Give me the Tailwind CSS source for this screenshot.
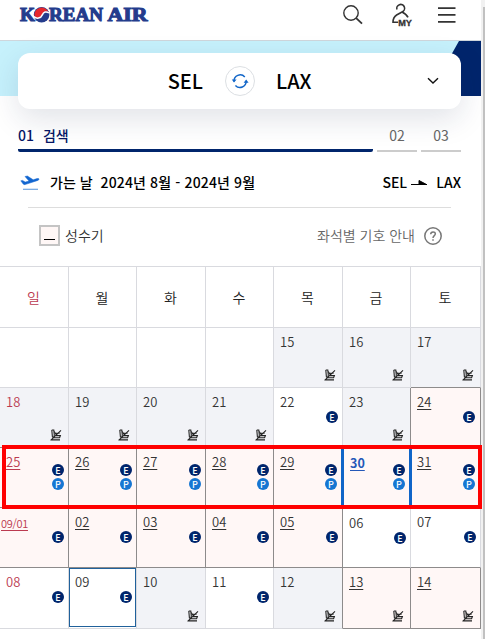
<!DOCTYPE html>
<html lang="ko">

<head>
    <meta charset="UTF-8">
    <meta name="viewport" content="width=device-width, initial-scale=1.0">
    <script src="https://cdn.jsdelivr.net/npm/@tailwindcss/browser@4"></script>
    <title>Korean Air</title>
</head>

<body class="relative h-[639px] w-[485px] overflow-hidden bg-white font-['Noto_Sans_CJK_KR',sans-serif] text-black">
    <svg class="hidden">
        <symbol id="seat" viewBox="0 0 12 12">
            <g fill="none" stroke="#222" stroke-width="1.1">
                <path d="M1.8 1 H3.8 L4.3 6 L3.8 8.8 H9.6 L10.4 6.6 H6 M1.8 1 L2.4 8 L4 8.8" />
                <path d="M4.2 2.5 L6.4 6 M4.5 4.3 L9.6 4.2 M1.5 10.9 H10 M11 1.4 L.6 11.4" />
            </g>
        </symbol>
    </svg>

    <header class="flex h-[41px] items-start justify-between border-b border-[#cfd6dc] pl-[19px] pr-[29px]">
        <svg class="mt-[5px]" width="132" height="20" viewBox="0 0 132 20">
            <g fill="#243c8c" stroke="#243c8c" stroke-width="1.1" font-family="Liberation Serif, serif" font-weight="700" font-size="19.5">
                <text x="1" y="16.4" textLength="15" lengthAdjust="spacingAndGlyphs">K</text>
                <text x="30" y="16.4" textLength="54" lengthAdjust="spacingAndGlyphs">REAN</text>
                <text x="88.5" y="16.4" textLength="40" lengthAdjust="spacingAndGlyphs">AIR</text>
            </g>
            <circle cx="22.6" cy="9.8" r="7.8" fill="#243c8c" />
            <path d="M15.6 11.6 A7.3 7.3 0 0 1 29.4 7 C26.5 5.2 24 7.4 22.9 10 C21.4 13.4 17.6 13.6 15.6 11.6Z" fill="#e5282d" />
            <path d="M14.8 11.6 C17.5 14 21.7 13.8 23.3 9.9 C24.6 6.8 27.2 6 30 8" fill="none" stroke="#fff" stroke-width="1.5" />
        </svg>
        <div class="flex items-start">
            <svg class="mt-[4px]" width="22" height="22" viewBox="0 0 22 22" fill="none" stroke="#333" stroke-width="1.4">
                <circle cx="9" cy="9" r="7.2" />
                <path d="M14.2 14.2 L20 19.6" stroke-width="1.8" />
            </svg>
            <svg class="ml-[27px] mt-[3px]" width="24" height="24" viewBox="0 0 24 24" fill="none" stroke="#333" stroke-width="1.6">
                <path d="M6 6.6 A3.9 3.9 0 1 1 11 9 L5.6 12 C3 13.6 2 15.5 2 19.3 H7.2" />
                <path d="M11 9 C14 10.5 16 12 17 14.4" />
                <text x="7.2" y="22.5" fill="#333" stroke="#333" stroke-width=".3" font-family="Liberation Sans, sans-serif" font-weight="700" font-size="9.2" textLength="13.8" lengthAdjust="spacingAndGlyphs">MY</text>
            </svg>
            <svg class="ml-[23px] mt-[6px]" width="18" height="18" viewBox="0 0 18 18" stroke="#333" stroke-width="1.7">
                <path d="M0 2.1 H17.5 M0 8.9 H17.5 M0 15.8 H17.5" />
            </svg>
        </div>
    </header>

    <section class="relative h-[55px] w-[481px] bg-[#c6f1fc] px-[18px] pt-[12px]">
        <svg class="absolute right-0 top-0" width="40" height="55" viewBox="0 0 40 55">
            <path d="M18 0 H40 V55 H0 V32Z" fill="#00256c" />
        </svg>
        <div class="relative flex h-[56px] w-[443px] items-center rounded-xl bg-white shadow-[0_10px_30px_rgba(20,40,80,0.13)]">
            <span class="w-[185px] text-right text-[20px] font-medium leading-[56px] text-black">SEL</span>
            <div class="ml-[22px] flex size-[30px] items-center justify-center rounded-full border border-[#dcdfe3]">
                <svg width="18" height="16" viewBox="0 0 18 16">
                    <path d="M3 8.5 A6.2 6.2 0 0 1 13.8 4 M15.2 8 A6.2 6.2 0 0 1 4.4 12.4" fill="none" stroke="#1266c8" stroke-width="1.5" />
                    <path d="M.8 6.5 H5.6 L3 9.6Z M12.6 9.8 H17.6 L15.2 6.6Z" fill="#1266c8" />
                </svg>
            </div>
            <span class="ml-[21px] text-[20px] font-medium leading-[56px]">LAX</span>
            <svg class="ml-auto mr-[22px]" width="12" height="8" viewBox="0 0 12 8" fill="none" stroke="#111" stroke-width="1.4">
                <path d="M1 1.2 L6 6 L11 1.2" />
            </svg>
        </div>
    </section>

    <ol class="mt-[27px] ml-[18px] flex w-[443px] gap-1 text-[14px] leading-[24px] text-[#666]">
        <li class="h-[29px] w-[355px] rounded-xs border-b-3 border-[#00256c] font-medium text-[#051766]"><span>01</span><span class="ml-[9px]">검색</span></li>
        <li class="h-[29px] w-[40px] border-b-2 border-[#ccc] text-center">02</li>
        <li class="h-[29px] w-[40px] border-b-2 border-[#ccc] text-center">03</li>
    </ol>

    <div class="mt-[18px] flex h-[24px] w-[461px] items-center pl-[20px] text-[14px] font-medium">
        <svg class="mt-px" width="20" height="16" viewBox="0 0 20 16">
            <path d="M.8 5.8 L2.6 5.4 L5.2 7.1 L9 6 L5 1.5 L7.4 1 L13.2 4.8 L17 3.6 Q19.2 3.1 19 4.2 Q18.8 5.2 17 5.7 L5 9.6 Q3.9 9.8 3.2 9Z" fill="#1266d0" stroke="#1266d0" stroke-width=".5" />
            <path d="M3 14.3 H18" stroke="#6ea3df" stroke-width="1.2" />
        </svg>
        <span class="ml-[10px]">가는 날</span>
        <span class="ml-[8px] tracking-[0.14px]">2024년 8월 - 2024년 9월</span>
        <span class="ml-auto flex items-center">SEL
            <svg class="ml-[4px] mr-[5px] mt-[2px]" width="16" height="6" viewBox="0 0 16 6">
                <path d="M0 4.5 H16 M8 .5 L15.5 4.5 H8Z" fill="#000" stroke="#000" />
            </svg>
            <span class="ml-[4px]">LAX</span></span>
    </div>

    <div class="ml-[28px] mt-[13px] w-[423px] border-t border-[#ddd]"></div>

    <div class="mt-[13px] flex h-[28px] w-[481px] items-center pl-[39px] pr-[39px] text-[14px]">
        <span class="flex size-[21px] justify-center border-2 border-[#c4c4c4] bg-[#fff7f6] pt-[12px]"><i class="h-px w-[11px] bg-black"></i></span>
        <span class="ml-[5px] font-[350] text-[#333]">성수기</span>
        <span class="ml-auto font-[350] text-[#666]">좌석별 기호 안내</span>
        <svg class="ml-[9px] mt-px" width="18" height="18" viewBox="0 0 18 18" fill="none" stroke="#777" stroke-width="1.5">
            <circle cx="9" cy="9" r="8.2" />
            <path d="M6.7 7.2 C6.8 4 11.5 4.3 11.3 7 C11.2 8.7 9 8.6 9 11 M9 12.2 V13.8" />
        </svg>
    </div>

    <main class="mt-[17px] w-[481px] border-t border-[#d9dadf]">
        <div id="week" class="grid h-[61px] grid-cols-[69px_68px_69px_68px_69px_68px_70px] text-[14px] font-[350]"></div>
        <div id="calendar" class="grid grid-cols-[69px_68px_69px_68px_69px_68px_70px] grid-rows-[60px_60px_60px_60px_61px] text-[13px] font-[350]"></div>
    </main>

    <div class="absolute left-[2px] top-[445px] z-10 h-[64px] w-[480px] border-4 border-[#ff0000]"></div>
    <div class="absolute right-0 top-0 h-full w-[4px] bg-[#f1f1f1] pl-[2px] pt-[7px]">
        <div class="h-full bg-[#c1c1c1]"></div>
    </div>

    <script>
        const week = document.getElementById('week')
        const calendar = document.getElementById('calendar')
        const days = ['일', '월', '화', '수', '목', '금', '토']

        days.forEach((day, i) => {
            week.innerHTML += `<div class="flex items-center justify-center border-r border-b border-[#d9dadf] pr-px ${i == 0 ? 'text-[#bb3a50]' : 'text-[#222]'}">${day}</div>`
        })

        // day, seats (x = sold out, e = economy, p = prestige), peak season
        const cells = [
            [''], [''], [''], [''], ['15', 'x'], ['16', 'x'], ['17', 'x'],
            ['18', 'x'], ['19', 'x'], ['20', 'x'], ['21', 'x'], ['22', 'e'], ['23', 'x'], ['24', 'e', 1],
            ['25', 'ep', 1], ['26', 'ep', 1], ['27', 'ep', 1], ['28', 'ep', 1], ['29', 'ep', 1], ['30', 'ep', 1], ['31', 'ep', 1],
            ['09/01', 'e', 1], ['02', 'e', 1], ['03', 'e', 1], ['04', 'e', 1], ['05', 'e', 1], ['06', 'e'], ['07', 'e'],
            ['08', 'e'], ['09', 'e'], ['10', 'x'], ['11', 'e'], ['12', 'x'], ['13', 'x', 1], ['14', 'x', 1]
        ]

        cells.forEach(([day, seats = '', peak], i) => {
            const next = i % 7 < 6 && cells[i + 1][2]
            const below = i + 7 < cells.length && cells[i + 7][2]
            const right = peak || next ? 'border-r-[#8d8b8b]' : 'border-r-[#d9dadf]'
            const bottom = peak || below ? 'border-b-[#8d8b8b]' : 'border-b-[#d9dadf]'
            const bg = peak ? 'bg-[#fff7f6]' : seats == 'x' ? 'bg-[#f2f3f7]' : 'bg-white'
            const color = day == '30' ? 'text-[#2458b8] font-bold' : i % 7 == 0 ? 'text-[#bb3a50]' : 'text-[#333]'
            let place = 'left-[6px] top-[5px]'
            if (day == '09/01') place = 'left-px top-[6px] text-[11px] tracking-[-0.3px]'
            if (day == '30') place = 'left-[7px] top-[6px] text-[12.5px]'
            if (day == '06') place = 'left-[6px] top-[6px]'
            let icons = ''
            if (seats == 'x') {
                icons = `<svg class="absolute bottom-[6px] ${i % 7 == 4 || i % 7 == 5 ? 'right-[6px]' : 'right-[6px]'}" width="12" height="12"><use href="#seat" /></svg>`
            } else {
                if (seats.includes('e')) icons += `<span class="flex size-[12px] items-center justify-center rounded-full bg-[#00256c] font-['Noto_Sans_CJK_KR'] text-[9px] leading-none font-medium text-white">E</span>`
                if (seats.includes('p')) icons += `<span class="flex size-[12px] items-center justify-center rounded-full bg-[#1676d2] font-['Noto_Sans_CJK_KR'] text-[9px] leading-none font-medium text-white">P</span>`
                const top = seats == 'ep' ? 'top-[16px]' : day == '06' ? 'top-[24px]' : 'top-[23px]'
                const side = day == '29' || day == '30' || day == '24' || day == '31' ? 'right-[5px]' : 'right-[4px]'
                icons = `<div class="absolute flex flex-col gap-[2px] ${side} ${top}">${icons}</div>`
            }
            calendar.innerHTML +=
                `<div class="relative border-r border-b ${right} ${bottom} ${bg} ${color}">
                    <span class="absolute leading-[18px] underline-offset-[2px] ${place} ${peak ? 'underline' : ''}">${day}</span>
                    ${icons}
                    ${day == '30' ? '<i class="absolute -left-[2px] -top-px h-[60px] w-[3px] bg-[#1065c8]"></i>' : ''}
                    ${day == '31' ? '<i class="absolute -left-[2px] -top-px h-[60px] w-[3px] bg-[#1065c8]"></i>' : ''}
                    ${day == '09' ? '<i class="absolute inset-x-0 top-0 bottom-px border border-[#20619b]"></i>' : ''}
                </div>`
        })
    </script>
</body>

</html>
